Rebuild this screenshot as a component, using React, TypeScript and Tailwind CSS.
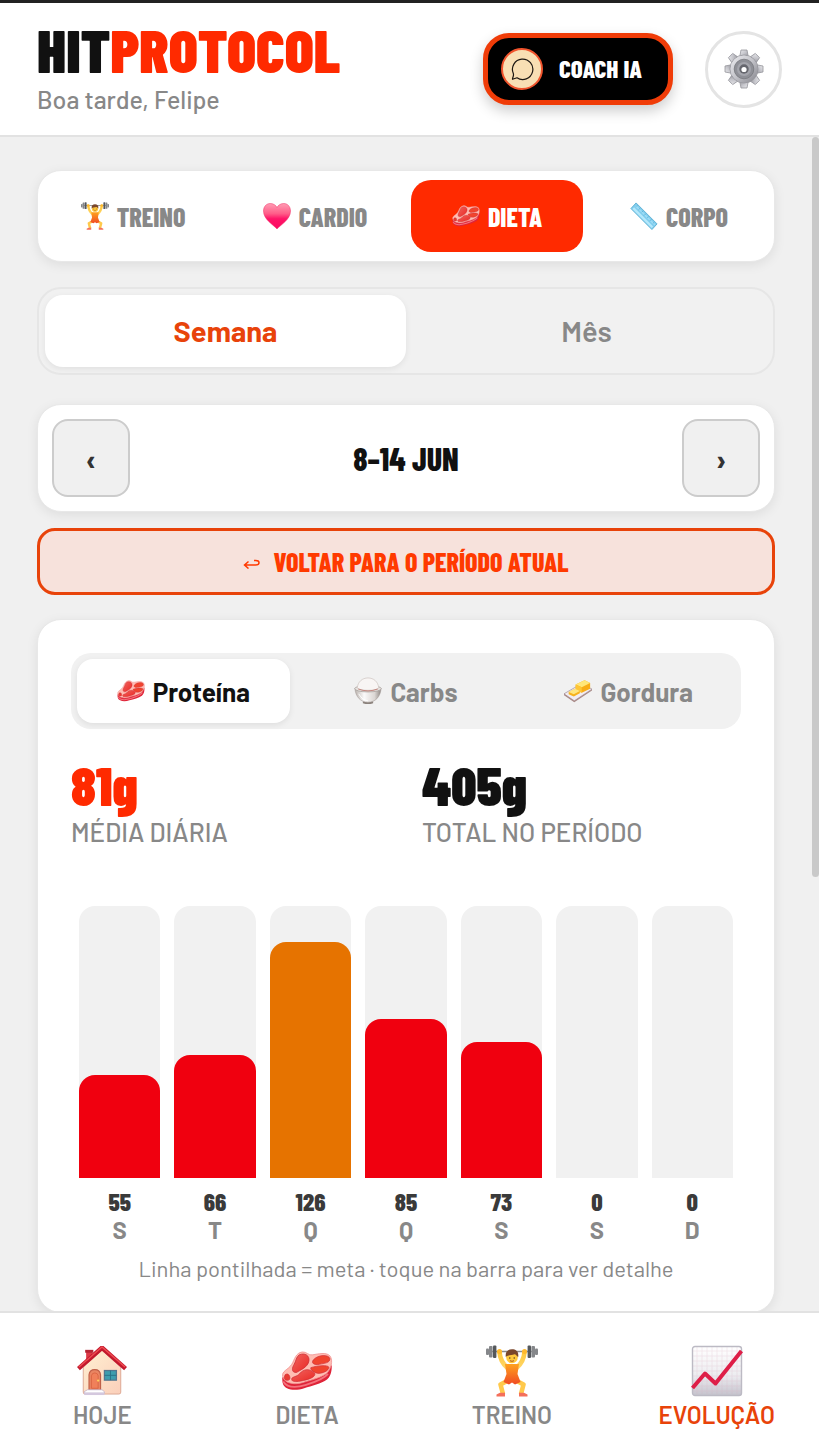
import { useState } from "react";
import type { ComponentType } from "react";

const display = "font-['Barlow_Condensed','Roboto_Condensed','Liberation_Sans_Narrow',Roboto,sans-serif]";
const body = "font-[Barlow,Roboto,sans-serif]";

type IconProps = { className?: string };

function Gradients() {
  return (
    <svg className="absolute size-0" aria-hidden="true">
      <defs>
        <linearGradient id="skin" x1="0" y1="0" x2="0" y2="1">
          <stop offset="0" stopColor="#ffc83c" />
          <stop offset="1" stopColor="#ffd667" />
        </linearGradient>
        <linearGradient id="suit" x1="0" y1="0" x2="0" y2="1">
          <stop offset="0" stopColor="#ffa21f" />
          <stop offset="1" stopColor="#f04a24" />
        </linearGradient>
        <linearGradient id="heart" x1="0" y1="0" x2="0" y2="1">
          <stop offset="0" stopColor="#ff9db4" />
          <stop offset="0.4" stopColor="#ff5c88" />
          <stop offset="0.6" stopColor="#ff1468" />
          <stop offset="1" stopColor="#fa0a62" />
        </linearGradient>
        <linearGradient id="meat" x1="0" y1="0" x2="1" y2="1">
          <stop offset="0" stopColor="#f0645f" />
          <stop offset="1" stopColor="#ea2723" />
        </linearGradient>
        <linearGradient id="metal" x1="0" y1="0" x2="1" y2="1">
          <stop offset="0" stopColor="#ececef" />
          <stop offset="0.5" stopColor="#c3c3c9" />
          <stop offset="1" stopColor="#86868d" />
        </linearGradient>
        <linearGradient id="bowl" x1="0" y1="0" x2="1" y2="0">
          <stop offset="0" stopColor="#b9b2ad" />
          <stop offset="0.35" stopColor="#fbfafa" />
          <stop offset="0.75" stopColor="#dcd7d4" />
          <stop offset="1" stopColor="#8f8884" />
        </linearGradient>
        <linearGradient id="paper" x1="0" y1="0" x2="0" y2="1">
          <stop offset="0" stopColor="#ffffff" />
          <stop offset="0.6" stopColor="#ececf0" />
          <stop offset="1" stopColor="#c4c2cc" />
        </linearGradient>
        <linearGradient id="wall" x1="0" y1="0" x2="1" y2="1">
          <stop offset="0" stopColor="#fff0d2" />
          <stop offset="1" stopColor="#fbcfba" />
        </linearGradient>
      </defs>
    </svg>
  );
}

function Lifter({ className }: IconProps) {
  return (
    <svg viewBox="0 0 52 52" className={className} aria-hidden="true">
      <path d="M4 6.500H48" stroke="#8b8b8b" strokeWidth="1.600" />
      <g fill="#85878a">
        <rect x="0" y="3.500" width="3" height="6.500" rx="1" />
        <rect x="3" y="1" width="3.600" height="11.500" rx="1" />
        <rect x="7" y="0.500" width="3.400" height="12.500" rx="1" fill="#55585b" />
        <rect x="41.600" y="0.500" width="3.400" height="12.500" rx="1" fill="#55585b" />
        <rect x="45.400" y="1" width="3.600" height="11.500" rx="1" />
        <rect x="49" y="3.500" width="3" height="6.500" rx="1" />
      </g>
      <path d="M13.500 7C14 15 17 19 21.500 23M38.500 7C38 15 35 19 30.500 23" fill="none" stroke="url(#skin)" strokeWidth="4.600" strokeLinecap="round" />
      <circle cx="13.500" cy="6.500" r="2.500" fill="#ffb92e" />
      <circle cx="38.500" cy="6.500" r="2.500" fill="#ffb92e" />
      <path d="M21 36L14.500 39.500 17 49M31 36L37.500 39.500 35 49" fill="none" stroke="#ffc94b" strokeWidth="4.600" strokeLinejoin="round" />
      <path d="M19 19H33L31.500 29 34.500 37 29 39.500 26 37.500 23 39.500 17.500 37 20.500 29Z" fill="url(#suit)" />
      <path d="M10.500 51.500V49.500L14 47.800H19V51.500ZM41.500 51.500V49.500L38 47.800H33V51.500Z" fill="#f46f5a" />
      <circle cx="26" cy="12.500" r="5.800" fill="#ffc83c" />
      <path d="M19.800 12C19 6.500 22 4.200 26 4.200S33 6.500 32.200 12C30.500 11 30 9.500 28.500 9.300 25.500 10.600 22 9.600 19.800 12Z" fill="#79462b" />
      <circle cx="23.800" cy="13" r="0.700" fill="#4b2d14" />
      <circle cx="28.200" cy="13" r="0.700" fill="#4b2d14" />
      <path d="M24 15.700Q26 17 28 15.700" fill="none" stroke="#a84c1c" strokeWidth="0.900" />
    </svg>
  );
}

function Heart({ className }: IconProps) {
  return (
    <svg viewBox="0 0 28 28" className={className} aria-hidden="true">
      <path d="M14 27C10 22.500 .5 17.500 .5 9 .5 4.500 3.500 1.500 7.200 1.500 10.500 1.500 13 3.300 14 5.500 15 3.300 17.500 1.500 20.800 1.500 24.500 1.500 27.500 4.500 27.500 9 27.500 17.500 18 22.500 14 27Z" fill="url(#heart)" stroke="#ee2a62" strokeWidth="0.500" />
    </svg>
  );
}

function Steak({ className }: IconProps) {
  return (
    <svg viewBox="0 0 54 42" className={className} aria-hidden="true">
      <path d="M1 28C1 34 2 37 6 39 11 41.500 18 41 24 39 32 37 42 34 48 30 51 27.500 53 23 53 16L50 9 2 27Z" fill="#df2438" />
      <path d="M2 32C7 40 18 38 26 35.500 34 33 44 30 49 24" fill="none" stroke="#f4727c" strokeWidth="2" />
      <path d="M1.500 27C0 21 7 20 11 14 14 9 15 2 22 1 27 .5 28 5 33 4 39 3 47 1 51 5 55 10 52 20 47 24 40 29 29 31 23 33 15 35.500 4 35 1.500 27Z" fill="#ffbdb3" stroke="#f08c8c" strokeWidth="0.800" />
      <path d="M19 4C25 1.500 30 5 29 10.500 28 17 20 20 16 22.500 10 23 11.500 17 13.500 14 15.500 11 15.500 6 19 4Z" fill="url(#meat)" stroke="#cb2c35" strokeWidth="0.800" />
      <path d="M34 9C39 3.500 50 3.500 51 8 51.500 12.500 45 13 40 14 35 15 30.500 13 34 9Z" fill="#f0442e" stroke="#cb2c35" strokeWidth="0.700" />
      <path d="M31 17.500C38 15 49 14.500 50 17 50 21 43 23.500 39 23.500 36 23.500 30 20 31 17.500Z" fill="#f0442e" stroke="#cb2c35" strokeWidth="0.700" />
      <path d="M19 24C24 18 30 18.500 35 23 37 27.500 28 30 23 31 17 32.500 10 33 11 29 11.500 27 16.500 27 19 24Z" fill="url(#meat)" stroke="#cb2c35" strokeWidth="0.700" />
      <path d="M4 25C7 22.500 9.500 26 9 29 8.500 32 3 31 3 28Z" fill="#e93b32" stroke="#cb2c35" strokeWidth="0.700" />
    </svg>
  );
}

function Ruler({ className }: IconProps) {
  return (
    <svg viewBox="0 0 30 30" className={className} aria-hidden="true">
      <path d="M6.500 1L29 23.500 23.500 29.500 1 7Z" fill="#7fcdee" stroke="#5fb0d3" strokeWidth="1" strokeLinejoin="round" />
      <path d="M3.500 6.500L24 27" stroke="#b5e8fb" strokeWidth="2.500" />
      <path d="M6 4L26.500 24.500" stroke="#9fdcf5" strokeWidth="1.500" />
      <path d="M8 3.500L6.500 5M11 6.500L9 8.500M14 9.500L12.500 11M17 12.500L15 14.500M20 15.500L18.500 17M23 18.500L21 20.500M26 21.500L24.500 23" stroke="#4fa5cc" strokeWidth="0.700" />
    </svg>
  );
}

function Rice({ className }: IconProps) {
  return (
    <svg viewBox="0 0 30 30" className={className} aria-hidden="true">
      <path d="M9.500 26H20.500V28Q15 30 9.500 28Z" fill="#8b827c" />
      <path d="M1 12C1.500 21 7 27 15 27S28.500 21 29 12Z" fill="url(#bowl)" stroke="#a39b96" strokeWidth="0.600" />
      <ellipse cx="15" cy="12.500" rx="14.200" ry="3.500" fill="#e8e5e2" stroke="#a39b96" strokeWidth="0.800" />
      <path d="M3.500 12C4 5 9 1 15 1S26 5 26.500 12C23 15 7 15 3.500 12Z" fill="#f8f5f4" stroke="#d0c6c2" strokeWidth="0.800" />
      <path d="M4.500 12.800Q15 17 25.500 12.800" fill="none" stroke="#c08078" strokeWidth="1" />
      <path d="M5 18Q9 25 15 25.500" fill="none" stroke="#ffffff" strokeWidth="1" />
    </svg>
  );
}

function Butter({ className }: IconProps) {
  return (
    <svg viewBox="0 0 30 24" className={className} aria-hidden="true">
      <path d="M0 15L19 4 30 10 11 22.500Z" fill="#f1ecf2" stroke="#a7939d" strokeWidth="0.800" />
      <path d="M0 15L11 22.500 30 10V11.500L11 24 0 16.500Z" fill="#a98a87" />
      <path d="M12.500 5L22 .5 28 3.500V9.500L19 14 12.500 11Z" fill="#f8ad17" />
      <path d="M12.500 5L22 .5 28 3.500 19 8Z" fill="#ffe77a" />
      <path d="M12.500 5L19 8V14L12.500 11Z" fill="#ffc635" />
      <path d="M5 13L12 9.500 17 12 17 14.500 10.500 18 5 15.500Z" fill="#f7b21d" />
      <path d="M5 13L12 9.500 17 12 10.500 15.500Z" fill="#ffe680" />
    </svg>
  );
}

function House({ className }: IconProps) {
  return (
    <svg viewBox="0 0 52 52" className={className} aria-hidden="true">
      <path d="M9.500 5H16V18H9.500Z" fill="#dd3946" />
      <path d="M8.500 4H17V7H8.500Z" fill="#b52434" />
      <path d="M6.500 22L26 4.500 45.500 22V48Q45.500 50 43.500 50H8.500Q6.500 50 6.500 48Z" fill="url(#wall)" stroke="#d9a08b" strokeWidth="0.900" />
      <path d="M1.500 23.500L26 1.800 50.500 23.500" fill="none" stroke="#c3182d" strokeWidth="4.600" strokeLinejoin="round" />
      <path d="M2 21.800L26 1 50 21.800" fill="none" stroke="#ee4b50" strokeWidth="1.600" strokeLinejoin="round" />
      <path d="M12.500 46V30Q13 24.500 18.500 24.500T24.500 30V46Z" fill="#e98562" stroke="#c06049" strokeWidth="1.200" />
      <path d="M15 44V31Q15.500 28 18.500 28T22 31V44Z" fill="#f0805a" stroke="#d8603f" strokeWidth="0.800" />
      <circle cx="22" cy="36" r="1.200" fill="#ffd35a" />
      <rect x="28.500" y="25.500" width="12.500" height="10" fill="#3e9dae" stroke="#55758e" strokeWidth="1.300" />
      <path d="M34.800 25.500V35.500M28.500 30.500H41" stroke="#2a7186" strokeWidth="1" />
      <path d="M7.500 49V47.500L11 45.500H26L28.500 47.500V49Z" fill="#fff" stroke="#b8a8c4" strokeWidth="0.700" />
      <path d="M7.500 48.500H28.500V51H7.500Z" fill="#d4c8de" />
    </svg>
  );
}

function Chart({ className }: IconProps) {
  return (
    <svg viewBox="0 0 52 52" className={className} aria-hidden="true">
      <rect x="1.500" y="1.500" width="49" height="49" rx="2.500" fill="url(#paper)" stroke="#bcbac4" strokeWidth="1.400" />
      <path d="M6 2V49M11 2V49M16 2V49M21 2V49M26 2V49M31 2V49M36 2V49M41 2V49M46 2V49M2 6H50M2 11H50M2 16H50M2 21H50M2 26H50M2 31H50M2 36H50M2 41H50M2 46H50" stroke="#d9a9bd" strokeWidth="0.500" opacity="0.400" />
      <path d="M1.500 43L14 28.500 24.500 38.500 50.500 6" fill="none" stroke="#de1f48" strokeWidth="4" strokeLinejoin="round" />
    </svg>
  );
}

function Gear({ className }: IconProps) {
  return (
    <svg viewBox="0 0 40 40" className={className} aria-hidden="true">
      <g fill="url(#metal)" stroke="#94949b" strokeWidth="0.800" strokeLinejoin="round">
        {[0, 45, 90, 135, 180, 225, 270, 315].map((a) => (
          <path key={a} transform={`rotate(${a} 20 20)`} d="M15.500 9L17 1H23L24.500 9Z" />
        ))}
        <circle cx="20" cy="20" r="14" />
      </g>
      <circle cx="20" cy="20" r="13.300" fill="url(#metal)" />
      <circle cx="20" cy="20" r="9.800" fill="#8f9097" stroke="#77787e" strokeWidth="0.800" />
      <circle cx="20" cy="20" r="7" fill="#a4a5ac" />
      <circle cx="20" cy="20" r="4.700" fill="#66676e" />
      <circle cx="20" cy="20.500" r="2.600" fill="#ffffff" />
    </svg>
  );
}

function Bubble({ className }: IconProps) {
  return (
    <svg viewBox="0 0 24 24" className={className} aria-hidden="true" fill="none" stroke="#1c1712" strokeWidth="1.200" strokeLinejoin="round">
      <path d="M3.300 16.400A10.200 10.200 0 1 1 7 20.800L2.500 22.300C2.300 20.500 4.200 19.400 3.300 16.400Z" />
    </svg>
  );
}

function BackArrow({ className }: IconProps) {
  return (
    <svg viewBox="0 0 18 14" className={className} aria-hidden="true" fill="none" stroke="currentColor" strokeWidth="1.500">
      <path d="M5.500 6.500L1.500 10 5.500 13.500M1.500 10H12.500Q16 10 16 7.700T12.500 5.500H11" />
    </svg>
  );
}

type Item = { label: string; Icon: ComponentType<IconProps>; size: string };

const sections: Item[] = [
  { label: "TREINO", Icon: Lifter, size: "size-7" },
  { label: "CARDIO", Icon: Heart, size: "size-7" },
  { label: "DIETA", Icon: Steak, size: "h-6 w-7" },
  { label: "CORPO", Icon: Ruler, size: "size-7" },
];

const macros: Item[] = [
  { label: "Proteína", Icon: Steak, size: "h-6 w-7" },
  { label: "Carbs", Icon: Rice, size: "size-7" },
  { label: "Gordura", Icon: Butter, size: "h-6 w-7" },
];

const pages: Item[] = [
  { label: "HOJE", Icon: House, size: "size-[50px]" },
  { label: "DIETA", Icon: Steak, size: "h-10 w-[54px]" },
  { label: "TREINO", Icon: Lifter, size: "size-[52px]" },
  { label: "EVOLUÇÃO", Icon: Chart, size: "size-[52px]" },
];

const days = [
  { day: "S", grams: 55 },
  { day: "T", grams: 66 },
  { day: "Q", grams: 126 },
  { day: "Q", grams: 85 },
  { day: "S", grams: 73 },
  { day: "S", grams: 0 },
  { day: "D", grams: 0 },
];
const scaleTop = 145.5;
const nearGoal = 100;

const cardShadow = "shadow-[0_3px_12px_rgba(0,0,0,0.08)]";
const stepButton = "size-[78px] rounded-2xl border-2 border-[#ccc] bg-[#f0f0f0] text-[32px] font-bold text-[#333]";

export default function App() {
  const [section, setSection] = useState("DIETA");
  const [range, setRange] = useState("Semana");
  const [macro, setMacro] = useState("Proteína");

  return (
    <div className={`h-screen bg-white pr-[21px] text-[#111] ${body}`}>
      <Gradients />
      <div className="flex h-full flex-col overflow-hidden border-t-3 border-[#222]">
        <header className="flex h-[134px] shrink-0 items-center justify-between border-b-2 border-[#e2e2e2] px-[37px]">
          <div>
            <h1 className={`text-[60px] leading-[60px] font-black ${display}`}>
              HIT<span className="text-[#ff2a00]">PROTOCOL</span>
            </h1>
            <p className="text-[25px] leading-10 font-medium text-[#888]">Boa tarde, Felipe</p>
          </div>
          <div className="flex items-center gap-8">
            <button className={`flex h-[72px] w-[190px] items-center gap-4 rounded-[26px] border-5 border-[#f03c08] bg-black pl-[13px] text-white shadow-[0_6px_14px_rgba(0,0,0,0.2)] ${display}`}>
              <span className="flex size-[42px] items-center justify-center rounded-full border-2 border-[#f0532c] bg-[#f8dfb4]">
                <Bubble className="size-6" />
              </span>
              <span className="text-[25px] font-extrabold whitespace-nowrap">COACH IA</span>
            </button>
            <button aria-label="Configurações" className="flex size-[77px] items-center justify-center rounded-full border-3 border-[#e4e4e4] bg-white">
              <Gear className="size-10" />
            </button>
          </div>
        </header>

        <div className="flex min-h-0 flex-1 bg-[#f0f0f0]">
          <main className="min-w-0 flex-1 overflow-hidden px-[37px] pt-[33px]">
            <nav className={`grid grid-cols-4 gap-2.5 rounded-3xl border border-[#e8e8e8] bg-white p-[9px] ${cardShadow}`}>
              {sections.map(({ label, Icon, size }) => (
                <button
                  key={label}
                  onClick={() => setSection(label)}
                  className={`flex h-[72px] items-center justify-center gap-2 rounded-[20px] text-[26px] font-extrabold ${display} ${section === label ? "bg-[#ff2a00] text-white" : "text-[#888]"}`}
                >
                  <Icon className={size} />
                  {label}
                </button>
              ))}
            </nav>

            <div className="mt-[25px] grid grid-cols-2 rounded-3xl border-2 border-[#e6e6e6] bg-[#f1f1f1] p-1.5">
              {["Semana", "Mês"].map((label) => (
                <button
                  key={label}
                  onClick={() => setRange(label)}
                  className={`h-[72px] rounded-[18px] text-[29px] ${range === label ? "bg-white font-bold text-[#e8430a] shadow-[0_2px_6px_rgba(0,0,0,0.07)]" : "font-semibold text-[#888]"}`}
                >
                  {label}
                </button>
              ))}
            </div>

            <div className={`mt-[29px] flex items-center justify-between rounded-3xl border border-[#e8e8e8] bg-white p-3.5 ${cardShadow}`}>
              <button aria-label="Semana anterior" className={stepButton}>‹</button>
              <span className={`text-[32px] font-extrabold ${display}`}>8–14 JUN</span>
              <button aria-label="Próxima semana" className={stepButton}>›</button>
            </div>

            <button className={`mt-4 flex h-[67px] w-full items-center justify-center gap-3 rounded-[18px] border-3 border-[#e8430a] bg-[#f7e2dc] text-[26px] font-extrabold text-[#ff3a00] ${display}`}>
              <BackArrow className="h-3.5 w-[18px]" />
              VOLTAR PARA O PERÍODO ATUAL
            </button>

            <section className={`mt-6 rounded-3xl border border-[#e8e8e8] bg-white px-[33px] pt-[33px] pb-7 ${cardShadow}`}>
              <div className="grid grid-cols-3 gap-2.5 rounded-[20px] bg-[#f1f1f1] p-1.5">
                {macros.map(({ label, Icon, size }) => (
                  <button
                    key={label}
                    onClick={() => setMacro(label)}
                    className={`flex h-16 items-center justify-center gap-2 rounded-2xl text-[26px] font-bold ${macro === label ? "bg-white text-[#111] shadow-[0_2px_6px_rgba(0,0,0,0.08)]" : "text-[#888]"}`}
                  >
                    <Icon className={size} />
                    {label}
                  </button>
                ))}
              </div>

              <div className="mt-[25px] grid grid-cols-2 gap-8">
                <div>
                  <div className={`text-[55px] leading-[60px] font-black text-[#ff2a00] ${display}`}>81g</div>
                  <div className="text-[26px] leading-9 font-medium text-[#888]">MÉDIA DIÁRIA</div>
                </div>
                <div>
                  <div className={`text-[55px] leading-[60px] font-black ${display}`}>405g</div>
                  <div className="text-[26px] leading-9 font-medium text-[#888]">TOTAL NO PERÍODO</div>
                </div>
              </div>

              <div className="mt-14 grid grid-cols-7 gap-3.5 px-2">
                {days.map(({ day, grams }, i) => (
                  <button key={i} className="flex flex-col items-center">
                    <span className="flex h-[272px] w-full items-end overflow-hidden rounded-t-2xl bg-[#f1f1f1]">
                      <span
                        className={`w-full rounded-t-2xl ${grams > nearGoal ? "bg-[#e67300]" : "bg-[#f0000f]"}`}
                        style={{ height: `${(grams / scaleTop) * 100}%` }}
                      />
                    </span>
                    <span className={`mt-2 text-[25px] leading-[30px] font-extrabold text-[#3a3a3a] ${display}`}>{grams}</span>
                    <span className="text-2xl leading-7 font-bold text-[#888]">{day}</span>
                  </button>
                ))}
              </div>
              <p className="mt-2 text-center text-[22px] leading-8 text-[#888]">Linha pontilhada = meta · toque na barra para ver detalhe</p>
            </section>
          </main>
          <div className="w-[7px] shrink-0">
            <div className="h-[63%] rounded-full bg-[#c9c9c9]" />
          </div>
        </div>

        <nav className="grid h-[145px] shrink-0 grid-cols-4 border-t-2 border-[#e2e2e2] bg-white pt-[30px]">
          {pages.map(({ label, Icon, size }) => (
            <a key={label} href={`#${label.toLowerCase()}`} className={`flex flex-col items-center text-2xl leading-8 font-semibold ${label === "EVOLUÇÃO" ? "text-[#e8430a]" : "text-[#888]"}`}>
              <span className="flex h-14 items-center">
                <Icon className={size} />
              </span>
              {label}
            </a>
          ))}
        </nav>
      </div>
    </div>
  );
}
